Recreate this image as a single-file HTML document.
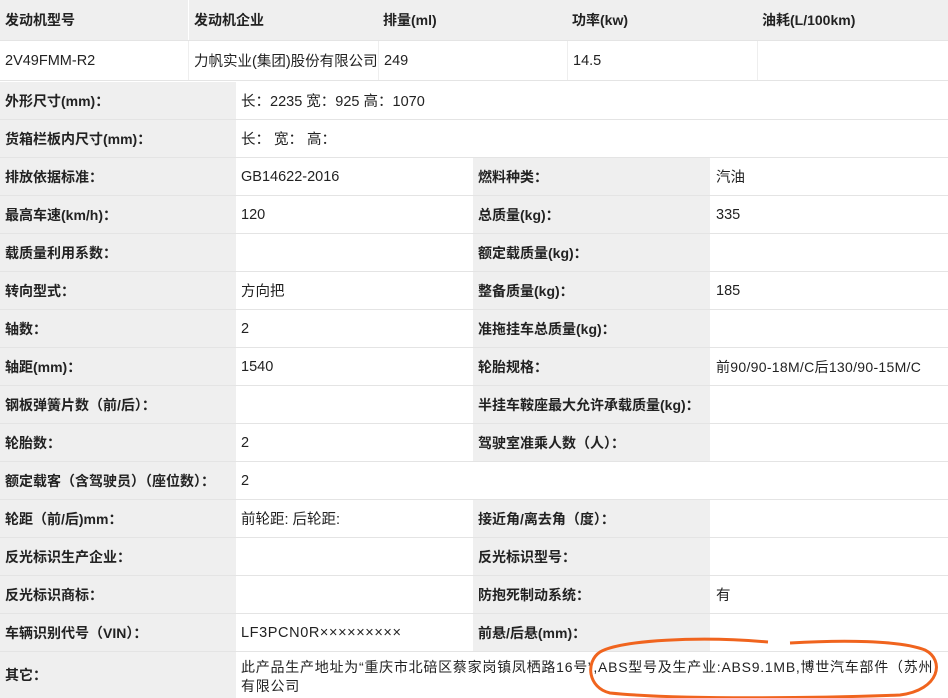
<!DOCTYPE html><html><head><meta charset="utf-8"><style>
*{margin:0;padding:0;box-sizing:border-box}
body{width:948px;height:698px;background:#fff;font-family:"Liberation Sans","Noto Sans CJK SC",sans-serif;font-size:14px;color:#222;overflow:hidden;position:relative}
.r{position:absolute;left:0;width:948px;display:flex;border-bottom:1px solid #e4e4e4}
.r div{height:100%;display:flex;align-items:center;padding-left:5px;white-space:nowrap}
.g{background:#efefef;font-weight:bold}
.w{background:#fff;font-size:14.5px}
.l1{width:236px}.v1{width:237px}.l2{width:237px}.v2{width:238px;padding-left:6px!important}
</style></head><body>
<div class="r" style="top:0;height:41px;background:#efefef;font-weight:bold">
<div style="width:188px">发动机型号</div><div style="width:190px;border-left:1px solid #fff">发动机企业</div><div style="width:189px">排量(ml)</div><div style="width:190px">功率(kw)</div><div style="width:191px">油耗(L/100km)</div></div>
<div class="r" style="top:41px;height:40px;font-size:14.5px">
<div style="width:188px">2V49FMM-R2</div><div style="width:190px;border-left:1px solid #eee">力帆实业(集团)股份有限公司</div><div style="width:189px;border-left:1px solid #eee">249</div><div style="width:190px;border-left:1px solid #eee">14.5</div><div style="width:191px;border-left:1px solid #eee"></div></div>

<div class="r" style="top:82px;height:38px"><div class="g l1">外形尺寸(mm)：</div><div class="w">长：2235 宽：925 高：1070</div></div>
<div class="r" style="top:120px;height:38px"><div class="g l1">货箱栏板内尺寸(mm)：</div><div class="w">长： 宽： 高：</div></div>
<div class="r" style="top:158px;height:38px"><div class="g l1">排放依据标准：</div><div class="w v1">GB14622-2016</div><div class="g l2">燃料种类：</div><div class="w v2">汽油</div></div>
<div class="r" style="top:196px;height:38px"><div class="g l1">最高车速(km/h)：</div><div class="w v1">120</div><div class="g l2">总质量(kg)：</div><div class="w v2">335</div></div>
<div class="r" style="top:234px;height:38px"><div class="g l1">载质量利用系数：</div><div class="w v1"></div><div class="g l2">额定载质量(kg)：</div><div class="w v2"></div></div>
<div class="r" style="top:272px;height:38px"><div class="g l1">转向型式：</div><div class="w v1">方向把</div><div class="g l2">整备质量(kg)：</div><div class="w v2">185</div></div>
<div class="r" style="top:310px;height:38px"><div class="g l1">轴数：</div><div class="w v1">2</div><div class="g l2">准拖挂车总质量(kg)：</div><div class="w v2"></div></div>
<div class="r" style="top:348px;height:38px"><div class="g l1">轴距(mm)：</div><div class="w v1">1540</div><div class="g l2">轮胎规格：</div><div class="w v2" style="font-size:14px;letter-spacing:0.3px">前90/90-18M/C后130/90-15M/C</div></div>
<div class="r" style="top:386px;height:38px"><div class="g l1">钢板弹簧片数（前/后）：</div><div class="w v1"></div><div class="g l2">半挂车鞍座最大允许承载质量(kg)：</div><div class="w v2"></div></div>
<div class="r" style="top:424px;height:38px"><div class="g l1">轮胎数：</div><div class="w v1">2</div><div class="g l2">驾驶室准乘人数（人）：</div><div class="w v2"></div></div>
<div class="r" style="top:462px;height:38px"><div class="g l1">额定载客（含驾驶员）（座位数）：</div><div class="w">2</div></div>
<div class="r" style="top:500px;height:38px"><div class="g l1">轮距（前/后)mm：</div><div class="w v1">前轮距: 后轮距:</div><div class="g l2">接近角/离去角（度）：</div><div class="w v2"></div></div>
<div class="r" style="top:538px;height:38px"><div class="g l1">反光标识生产企业：</div><div class="w v1"></div><div class="g l2">反光标识型号：</div><div class="w v2"></div></div>
<div class="r" style="top:576px;height:38px"><div class="g l1">反光标识商标：</div><div class="w v1"></div><div class="g l2">防抱死制动系统：</div><div class="w v2">有</div></div>
<div class="r" style="top:614px;height:38px"><div class="g l1">车辆识别代号（VIN）：</div><div class="w v1" style="letter-spacing:0.6px">LF3PCN0R×××××××××</div><div class="g l2">前悬/后悬(mm)：</div><div class="w v2"></div></div>
<div class="r" style="top:652px;height:46px;border:none"><div class="g l1">其它：</div><div class="w" style="white-space:normal;display:block;padding-top:6px;line-height:19px;width:712px;font-size:14px;letter-spacing:0.75px;padding-right:4px">此产品生产地址为“重庆市北碚区蔡家岗镇凤栖路16号”,ABS型号及生产业:ABS9.1MB,博世汽车部件（苏州）有限公司</div></div>
<svg style="position:absolute;left:0;top:0" width="948" height="698"><path d="M768 642 C700 636 620 640 600 652 C585 662 588 688 610 693 C680 700 820 698 900 695 C940 690 945 660 925 650 C900 640 840 640 790 643" fill="none" stroke="#f0641e" stroke-width="3"/></svg>
</body></html>
